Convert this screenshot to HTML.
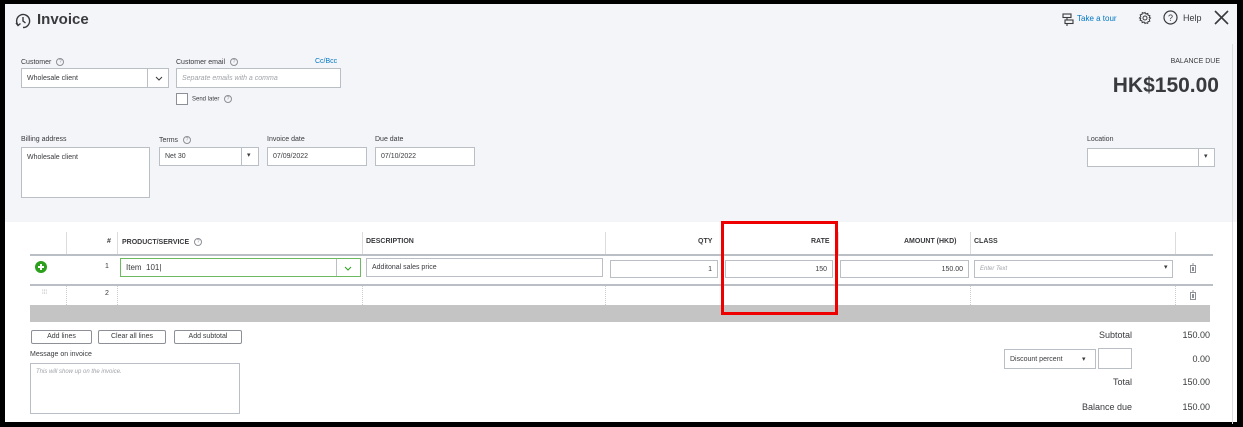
<!DOCTYPE html>
<html><head><meta charset="utf-8"><style>
*{box-sizing:border-box;margin:0;padding:0}
body{width:1243px;height:427px;background:#000;font-family:"Liberation Sans",sans-serif;color:#393a3d;position:relative;overflow:hidden}
.page{position:absolute;left:5px;top:4px;width:1232px;height:418px;background:#fff}
.hdr{position:absolute;left:0;top:0;width:1232px;height:218px;background:#f4f5f8}
.a{position:absolute;white-space:nowrap}
.lbl{font-size:7px;color:#393a3d}
.in{position:absolute;background:#fff;border:1px solid #babec5;font-size:7px;padding:0 5px;display:flex;align-items:center}
.q{display:inline-block;width:8px;height:8px;border:1px solid #8d9096;border-radius:50%;font-size:5px;text-align:center;line-height:6px;color:#8d9096;vertical-align:middle;margin-left:3px}
.th{position:absolute;top:234px;font-size:7px;font-weight:bold;color:#393a3d}
.vl{position:absolute;width:1px;background:#dcdcdc}
.btn{position:absolute;top:326px;height:14px;border:1px solid #8d9096;border-radius:2px;background:#fff;font-size:7px;text-align:center;line-height:12px}
.tot{position:absolute;font-size:9px;text-align:right}
</style></head><body>
<div class="page">
<div class="hdr"></div>
<div class="a" style="right:4px;top:40px;width:1px;height:380px;background:#dcdde0"></div>
<svg class="a" style="left:9px;top:8px" width="18" height="18" viewBox="0 0 18 18" fill="none" stroke="#393a3d" stroke-width="1.4"><path d="M4 13 A6.5 6.5 0 1 1 9 15.5"/><path d="M9 5v4l2.5 2"/><path d="M2 11l2 2.5 2.5-2"/></svg>
<div class="a" style="left:32px;top:7px;font-size:15px;font-weight:bold;color:#393a3d">Invoice</div>
<svg class="a" style="left:1057px;top:9px" width="12" height="13" viewBox="0 0 12 13" fill="none" stroke="#393a3d" stroke-width="1.1"><rect x="1" y="1" width="8" height="3.5"/><rect x="3" y="7" width="8" height="3.5"/><path d="M5 4.5v2.5M5 10.5V13"/></svg>
<div class="a" style="left:1072px;top:10px;font-size:8px;color:#0077c5">Take a tour</div>
<svg class="a" style="left:1133px;top:7px" width="14" height="14" viewBox="0 0 14 14" fill="none" stroke="#393a3d" stroke-width="1"><circle cx="7" cy="7" r="2"/><path d="M7 1.5l1 1.5 1.8-.6.3 1.8 1.8.5-.6 1.8L12.5 7l-1.3 1.3.6 1.8-1.8.5-.3 1.8-1.8-.6L7 12.5l-1-1.5-1.8.6-.3-1.8-1.8-.5.6-1.8L1.5 7l1.3-1.3-.6-1.8 1.8-.5.3-1.8 1.8.6z"/></svg>
<svg class="a" style="left:1158px;top:6px" width="15" height="15" viewBox="0 0 15 15"><circle cx="7.5" cy="7.5" r="6.5" fill="none" stroke="#393a3d" stroke-width="1.2"/><text x="7.5" y="11" font-size="9" text-anchor="middle" font-family="Liberation Sans" fill="#393a3d">?</text></svg>
<div class="a" style="left:1178px;top:9px;font-size:9px">Help</div>
<svg class="a" style="left:1209px;top:6px" width="15" height="15" viewBox="0 0 15 15" stroke="#393a3d" stroke-width="1.6"><path d="M1 1l13 13M14 1L1 14"/></svg>

<div class="a lbl" style="left:16px;top:54px">Customer <span class="q">?</span></div>
<div class="in" style="left:16px;top:64px;width:148px;height:20px">Wholesale client</div>
<div class="a" style="left:142px;top:65px;width:1px;height:18px;background:#babec5"></div>
<svg class="a" style="left:150px;top:72px" width="8" height="5"><path d="M1 1l3 3 3-3" stroke="#393a3d" fill="none"/></svg>
<div class="a lbl" style="left:171px;top:54px">Customer email <span class="q">?</span></div>
<div class="a" style="left:310px;top:54px;font-size:7px;color:#0077c5">Cc/Bcc</div>
<div class="in" style="left:171px;top:64px;width:165px;height:20px;color:#a0a3a8;font-style:italic">Separate emails with a comma</div>
<div class="a" style="left:171px;top:89px;width:12px;height:12px;border:1px solid #8d9096;background:#fff"></div>
<div class="a" style="left:187px;top:91px;font-size:6px">Send later <span class="q">?</span></div>
<div class="a" style="right:17px;top:54px;font-size:7px">BALANCE DUE</div>
<div class="a" style="right:18px;top:70px;font-size:21px;font-weight:bold;color:#393a3d">HK$150.00</div>

<div class="a lbl" style="left:16px;top:132px">Billing address</div>
<div class="in" style="left:16px;top:143px;width:129px;height:51px;align-items:flex-start;padding-top:6px">Wholesale client</div>
<div class="a lbl" style="left:154px;top:132px">Terms <span class="q">?</span></div>
<div class="in" style="left:154px;top:143px;width:100px;height:19px">Net 30</div>
<div class="a" style="left:236px;top:144px;width:1px;height:17px;background:#babec5"></div>
<div class="a" style="left:242px;top:147px;font-size:7px">▾</div>
<div class="a lbl" style="left:262px;top:132px">Invoice date</div>
<div class="in" style="left:262px;top:143px;width:100px;height:19px">07/09/2022</div>
<div class="a lbl" style="left:370px;top:132px">Due date</div>
<div class="in" style="left:370px;top:143px;width:100px;height:19px">07/10/2022</div>
<div class="a lbl" style="left:1082px;top:132px">Location</div>
<div class="in" style="left:1082px;top:144px;width:128px;height:19px"></div>
<div class="a" style="left:1193px;top:145px;width:1px;height:17px;background:#babec5"></div>
<div class="a" style="left:1199px;top:148px;font-size:7px">▾</div>

<div class="vl" style="left:61px;top:228px;height:22px"></div>
<div class="vl" style="left:112px;top:228px;height:22px"></div>
<div class="vl" style="left:357px;top:228px;height:22px"></div>
<div class="vl" style="left:600px;top:228px;height:22px"></div>
<div class="vl" style="left:833px;top:228px;height:22px"></div>
<div class="vl" style="left:965px;top:228px;height:22px"></div>
<div class="vl" style="left:1170px;top:228px;height:22px"></div>
<div class="th" style="left:102px">#</div>
<div class="th" style="left:117px">PRODUCT/SERVICE <span class="q" style="font-weight:normal">?</span></div>
<div class="th" style="left:361px">DESCRIPTION</div>
<div class="th" style="left:693px">QTY</div>
<div class="th" style="left:806px">RATE</div>
<div class="th" style="left:899px">AMOUNT (HKD)</div>
<div class="th" style="left:969px">CLASS</div>
<div class="a" style="left:25px;top:250px;width:1183px;height:2px;background:#babec5"></div>
<div class="a" style="left:25px;top:280px;width:1183px;height:2px;background:#babec5"></div>
<svg class="a" style="left:30px;top:257px" width="12" height="12"><circle cx="6" cy="6" r="6" fill="#2ca01c"/><path d="M6 3v6M3 6h6" stroke="#fff" stroke-width="2"/></svg>
<div class="a" style="left:100px;top:259px;font-size:7px">1</div>
<div class="in" style="left:115px;top:254px;width:241px;height:19px;border-color:#6cb95f;font-size:8px">Item&nbsp;&nbsp;101|</div>
<div class="a" style="left:331px;top:255px;width:1px;height:17px;background:#babec5"></div>
<svg class="a" style="left:339px;top:262px" width="8" height="5"><path d="M1 1l3 3 3-3" stroke="#2ca01c" fill="none"/></svg>
<div class="in" style="left:361px;top:254px;width:237px;height:19px">Additonal sales price</div>
<div class="in" style="left:605px;top:256px;width:108px;height:18px;justify-content:flex-end">1</div>
<div class="in" style="left:720px;top:256px;width:108px;height:18px;justify-content:flex-end">150</div>
<div class="in" style="left:835px;top:256px;width:129px;height:18px;justify-content:flex-end">150.00</div>
<div class="in" style="left:969px;top:256px;width:199px;height:18px;color:#a0a3a8;font-style:italic;font-size:6px">Enter Text</div>
<div class="a" style="left:1159px;top:259px;font-size:7px">▾</div>
<svg class="a" style="left:1184px;top:259px" width="8" height="10" fill="none" stroke="#8d9096"><path d="M1 2.5h6M3 1h2M1.5 2.5v7h5v-7M3.5 4v4M4.5 4v4"/></svg>
<div class="a" style="left:37px;top:286px;font-size:6px;color:#aaa">⁞⁞⁞</div>
<div class="a" style="left:100px;top:286px;font-size:7px">2</div>
<div class="a" style="left:61px;top:282px;height:19px;border-left:1px dotted #ccc"></div>
<div class="a" style="left:112px;top:282px;height:19px;border-left:1px dotted #ccc"></div>
<div class="a" style="left:357px;top:282px;height:19px;border-left:1px dotted #ccc"></div>
<div class="a" style="left:600px;top:282px;height:19px;border-left:1px dotted #ccc"></div>
<div class="a" style="left:965px;top:282px;height:19px;border-left:1px dotted #ccc"></div>
<div class="a" style="left:1170px;top:282px;height:19px;border-left:1px dotted #ccc"></div>
<svg class="a" style="left:1184px;top:286px" width="8" height="10" fill="none" stroke="#8d9096"><path d="M1 2.5h6M3 1h2M1.5 2.5v7h5v-7M3.5 4v4M4.5 4v4"/></svg>
<div class="a" style="left:25px;top:301px;width:1180px;height:17px;background:#c4c4c4"></div>
<div class="a" style="left:716px;top:217px;width:117px;height:94px;border:3px solid #ee0000"></div>

<div class="btn" style="left:26px;width:61px">Add lines</div>
<div class="btn" style="left:93px;width:68px">Clear all lines</div>
<div class="btn" style="left:169px;width:68px">Add subtotal</div>
<div class="a lbl" style="left:25px;top:347px">Message on invoice</div>
<div class="in" style="left:25px;top:359px;width:210px;height:51px;align-items:flex-start;padding-top:5px;color:#a0a3a8;font-style:italic;font-size:6px">This will show up on the invoice.</div>

<div class="tot" style="right:105px;top:326px">Subtotal</div>
<div class="tot" style="right:27px;top:326px">150.00</div>
<div class="in" style="left:999px;top:345px;width:92px;height:20px;font-size:7px">Discount percent</div>
<div class="a" style="left:1077px;top:351px;font-size:7px">▾</div>
<div class="in" style="left:1093px;top:344px;width:34px;height:21px"></div>
<div class="tot" style="right:27px;top:350px">0.00</div>
<div class="tot" style="right:105px;top:373px">Total</div>
<div class="tot" style="right:27px;top:373px">150.00</div>
<div class="tot" style="right:105px;top:398px">Balance due</div>
<div class="tot" style="right:27px;top:398px">150.00</div>
</div>
</body></html>
